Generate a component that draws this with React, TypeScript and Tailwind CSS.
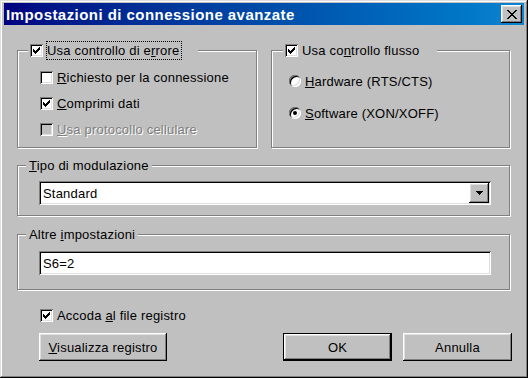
import type { ReactNode } from "react";

const FONT = { fontFamily: '"Liberation Sans", Arial, sans-serif' };

const RAISED =
  "shadow-[inset_-1px_-1px_#000,inset_1px_1px_#fff,inset_-2px_-2px_#808080,inset_2px_2px_#dfdfdf]";
const SUNKEN =
  "shadow-[inset_1px_1px_#808080,inset_-1px_-1px_#fff,inset_2px_2px_#000,inset_-2px_-2px_#dfdfdf]";
const ETCHED = "border border-[#808080] shadow-[inset_1px_1px_#fff,1px_1px_#fff]";

function CheckMark() {
  // classic 7x7 tick
  const px = [
    [6, 0], [5, 1], [6, 1], [0, 2], [4, 2], [5, 2], [6, 2],
    [0, 3], [1, 3], [3, 3], [4, 3], [5, 3], [0, 4], [1, 4], [2, 4], [3, 4], [4, 4],
    [1, 5], [2, 5], [3, 5], [2, 6],
  ];
  return (
    <svg width="7" height="7" viewBox="0 0 7 7" shapeRendering="crispEdges">
      {px.map(([x, y]) => (
        <rect key={`${x}-${y}`} x={x} y={y} width="1" height="1" fill="#000" />
      ))}
    </svg>
  );
}

function CloseGlyph() {
  const rows = [
    "XX......XX",
    ".XX....XX.",
    "..XX..XX..",
    "...XXXX...",
    "....XX....",
    "...XXXX...",
    "..XX..XX..",
    ".XX....XX.",
    "XX......XX",
  ];
  return (
    <svg width="10" height="9" viewBox="0 0 10 9" shapeRendering="crispEdges">
      {rows.flatMap((r, y) =>
        r.split("").map((c, x) =>
          c === "X" ? <rect key={`${x}-${y}`} x={x} y={y} width="1" height="1" fill="#000" /> : null
        )
      )}
    </svg>
  );
}

function Checkbox({ checked, disabled }: { checked?: boolean; disabled?: boolean }) {
  return (
    <span
      className={`shrink-0 w-[13px] h-[13px] flex items-center justify-center ${SUNKEN} ${
        disabled ? "bg-[#c0c0c0]" : "bg-white"
      }`}
    >
      {checked && <CheckMark />}
    </span>
  );
}

function Radio({ checked }: { checked?: boolean }) {
  return (
    <span
      className="shrink-0 w-[12px] h-[12px] rounded-full bg-white flex items-center justify-center shadow-[inset_1px_1px_#808080,inset_-1px_-1px_#fff,inset_2px_2px_#000,inset_-2px_-2px_#dfdfdf]"
    >
      {checked && <span className="w-[4px] h-[4px] rounded-full bg-black" />}
    </span>
  );
}

function Label({ text, k, disabled }: { text: string; k: number; disabled?: boolean }) {
  return (
    <span
      className={disabled ? "text-[#808080] [text-shadow:1px_1px_#fff]" : "text-black"}
    >
      {text.slice(0, k)}
      <u>{text[k]}</u>
      {text.slice(k + 1)}
    </span>
  );
}

function Btn({ children, w, def }: { children: ReactNode; w: string; def?: boolean }) {
  return (
    <div className={`${w} h-[28px] ${def ? "border border-black" : ""}`}>
      <div className={`w-full h-full bg-[#c0c0c0] ${RAISED} flex items-center justify-center`}>
        {children}
      </div>
    </div>
  );
}

export default function App() {
  return (
    <div
      style={FONT}
      className="w-[528px] h-[378px] bg-[#c0c0c0] text-[13px] tracking-[0.2px] text-black leading-none shadow-[inset_-1px_-1px_#000,inset_1px_1px_#dfdfdf,inset_-2px_-2px_#808080,inset_2px_2px_#fff] flex flex-col"
    >
      {/* Title bar */}
      <div className="px-[4px] pt-[3px]">
        <div className="h-[22px] flex items-center bg-linear-to-r from-[#000080] to-[#1084d0] pl-[2px]">
          <span className="flex-1 text-white font-bold text-[15px] tracking-[0.45px]">
            Impostazioni di connessione avanzate
          </span>
          <div className={`w-[21px] h-[18px] mr-[2px] bg-[#c0c0c0] ${RAISED} flex items-center justify-center`}>
            <CloseGlyph />
          </div>
        </div>
      </div>

      <div className="pl-[17px]">
        {/* Top row of group boxes */}
        <div className="mt-[25px] flex">
          <div className={`w-[240px] h-[98px] ${ETCHED}`}>
            <div className="-mt-[10px] ml-[10px] w-[170px] h-[19px] pl-[2px] bg-[#c0c0c0] flex items-center">
              <Checkbox checked />
              <span className="ml-[3px] h-[19px] border border-dotted border-black flex items-center pr-[1px]">
                <Label text="Usa controllo di errore" k={18} />
              </span>
            </div>
            <div className="mt-[4px]">
              {[
                { t: "Richiesto per la connessione", c: false, d: false },
                { t: "Comprimi dati", c: true, d: false },
                { t: "Usa protocollo cellulare", c: false, d: true },
              ].map((r) => (
                <div key={r.t} className="h-[26px] ml-[22px] flex items-center gap-[4px]">
                  <Checkbox checked={r.c} disabled={r.d} />
                  <Label text={r.t} k={0} disabled={r.d} />
                </div>
              ))}
            </div>
          </div>

          <div className={`ml-[14px] w-[239px] h-[98px] ${ETCHED}`}>
            <div className="-mt-[10px] ml-[11px] w-[154px] h-[19px] pl-[2px] bg-[#c0c0c0] flex items-center">
              <Checkbox checked />
              <span className="ml-[3px] h-[19px] border border-transparent flex items-center">
                <Label text="Usa controllo flusso" k={6} />
              </span>
            </div>
            <div className="mt-[5px]">
              <div className="h-[32px] ml-[17px] flex items-center gap-[4px]">
                <Radio />
                <Label text="Hardware (RTS/CTS)" k={0} />
              </div>
              <div className="h-[32px] ml-[17px] flex items-center gap-[4px]">
                <Radio checked />
                <Label text="Software (XON/XOFF)" k={0} />
              </div>
            </div>
          </div>
        </div>

        {/* Tipo di modulazione */}
        <div className={`mt-[17px] w-[493px] h-[51px] ${ETCHED}`}>
          <div className="-mt-[10px] ml-[8px] w-fit h-[19px] px-[3px] bg-[#c0c0c0] flex items-center">
            <Label text="Tipo di modulazione" k={0} />
          </div>
          <div className={`mt-[6px] ml-[21px] w-[452px] h-[24px] bg-white ${SUNKEN} p-[2px] flex items-center`}>
            <span className="flex-1 pl-[2px]">Standard</span>
            <div className={`w-[20px] h-full bg-[#c0c0c0] ${RAISED} flex items-center justify-center`}>
              <svg width="7" height="4" viewBox="0 0 7 4" shapeRendering="crispEdges">
                <polygon points="0,0 7,0 3.5,4" fill="#000" />
              </svg>
            </div>
          </div>
        </div>

        {/* Altre impostazioni */}
        <div className={`mt-[18px] w-[493px] h-[56px] ${ETCHED}`}>
          <div className="-mt-[10px] ml-[8px] w-fit h-[19px] px-[3px] bg-[#c0c0c0] flex items-center">
            <Label text="Altre impostazioni" k={6} />
          </div>
          <div className={`mt-[7px] ml-[21px] w-[452px] h-[24px] bg-white ${SUNKEN} px-[4px] flex items-center`}>
            S6=2
          </div>
        </div>

        <div className="mt-[12px] h-[26px] ml-[23px] flex items-center gap-[4px]">
          <Checkbox checked />
          <Label text="Accoda al file registro" k={7} />
        </div>

        <div className="mt-[5px] flex">
          <div className="ml-[22px]">
            <Btn w="w-[128px]">
              <Label text="Visualizza registro" k={0} />
            </Btn>
          </div>
          <div className="ml-[116px]">
            <Btn w="w-[109px]" def>
              OK
            </Btn>
          </div>
          <div className="ml-[11px]">
            <Btn w="w-[109px]">Annulla</Btn>
          </div>
        </div>
      </div>
    </div>
  );
}
